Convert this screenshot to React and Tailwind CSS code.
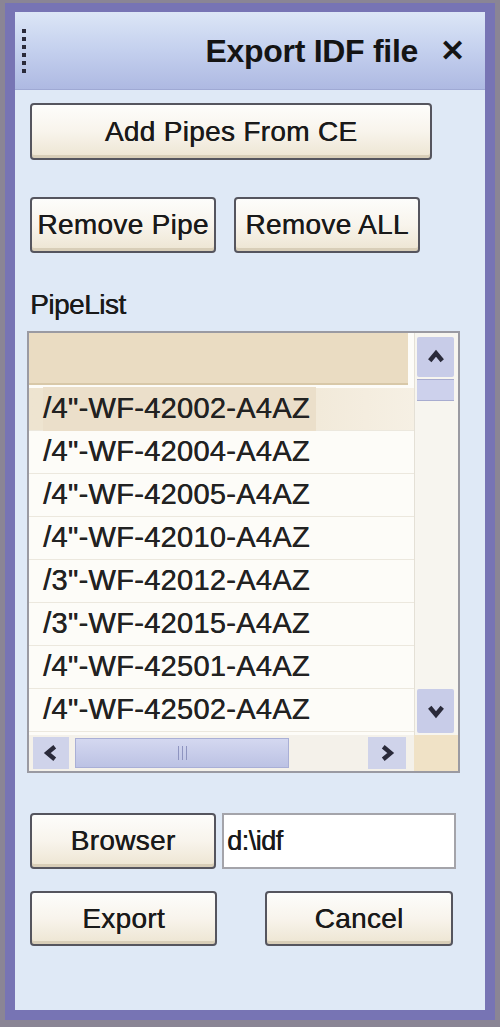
const pipes = [
  '/4"-WF-42002-A4AZ',
  '/4"-WF-42004-A4AZ',
  '/4"-WF-42005-A4AZ',
  '/4"-WF-42010-A4AZ',
  '/3"-WF-42012-A4AZ',
  '/3"-WF-42015-A4AZ',
  '/4"-WF-42501-A4AZ',
  '/4"-WF-42502-A4AZ',
];

const Btn = ({ children, className = "" }) => (
  <button
    className={`flex items-center justify-center rounded-[4px] border-2 border-[#55555e] bg-gradient-to-b from-[#fdfdfb] via-[#f8f4ec] to-[#ede5d2] text-[28px] tracking-[0.3px] text-[#1a1a1a] [text-shadow:0.4px_0_0_#1a1a1a] shadow-[inset_0_-3px_0_#d8ceb8] ${className}`}
  >
    {children}
  </button>
);

const Arrow = ({ dir }) => {
  const d = {
    up: "M3 11 L8 5 L13 11",
    down: "M3 5 L8 11 L13 5",
    left: "M11 3 L5 8 L11 13",
    right: "M5 3 L11 8 L5 13",
  }[dir];
  return (
    <svg width="20" height="20" viewBox="0 0 16 16">
      <path d={d} fill="none" stroke="#2a2a3a" strokeWidth="3.5" />
    </svg>
  );
};

export default function App() {
  return (
    <div
      className="w-[500px] h-[1027px] bg-[#8a8595] pt-[3px] px-[5px] pb-[7px]"
      style={{ fontFamily: '"Liberation Sans", Arial, sans-serif' }}
    >
      <div className="h-full bg-[#7774b4] pt-[9px] px-[10px] pb-[10px]">
        <div className="h-full flex flex-col bg-[#dfe9f6]">
          {/* title bar */}
          <div className="h-[78px] flex items-center bg-gradient-to-b from-[#dce6f6] via-[#c4d0ee] to-[#aeb9e2] border-b border-[#9fa9d4]">
            <div className="ml-[7px] flex flex-col gap-[4px]">
              {[0, 1, 2, 3, 4, 5].map((i) => (
                <div key={i} className="w-[4px] h-[4px] bg-[#2a2a3a]" />
              ))}
            </div>
            <div className="ml-auto text-[32px] font-bold text-[#141414] tracking-[-0.3px] leading-none">
              Export IDF file
            </div>
            <div className="ml-[22px] mr-[20px] text-[30px] font-bold leading-none text-[#141414]">
              ✕
            </div>
          </div>

          <div className="flex flex-col pl-[15px] pr-[10px]">
            <Btn className="mt-[13px] w-[402px] h-[57px]">Add Pipes From CE</Btn>

            <div className="mt-[37px] flex gap-[18px]">
              <Btn className="w-[186px] h-[56px]">Remove Pipe</Btn>
              <Btn className="w-[186px] h-[56px]">Remove ALL</Btn>
            </div>

            <div className="mt-[38px] text-[28px] text-[#1a1a1a] tracking-[-0.5px] leading-none [text-shadow:0.4px_0_0_#1a1a1a]">
              PipeList
            </div>

            {/* list box */}
            <div className="mt-[12px] -ml-[3px] w-[433px] h-[442px] border-2 border-[#9a9aa2] bg-[#fdfcf8] flex flex-col">
              <div className="flex flex-1 min-h-0">
                <div className="flex-1 flex flex-col">
                  <div className="h-[52px] bg-[#eadcc2] border-b-2 border-[#d8c8a8] mr-[6px]" />
                  <div className="flex flex-col pt-[3px]">
                    {pipes.map((p, i) => (
                      <div
                        key={p}
                        className={`h-[43px] flex items-center border-b border-[#ece8de] pl-[14px] text-[29px] text-[#222] tracking-[0.3px] [text-shadow:0.4px_0_0_#222] ${
                          i === 0 ? "bg-gradient-to-r from-[#eee4d0] via-[#eee4d0] to-[#f6f0e4]" : ""
                        }`}
                      >
                        <span className={i === 0 ? "bg-[#ebdfca] pr-[6px]" : ""}>{p}</span>
                      </div>
                    ))}
                  </div>
                </div>
                {/* vertical scrollbar */}
                <div className="w-[44px] flex flex-col border-l border-[#e4e0d6] bg-[#f7f5ef] pl-[2px] pr-[4px] pt-[4px]">
                  <div className="h-[40px] flex items-center justify-center bg-[#c8cce8] rounded-[2px]">
                    <Arrow dir="up" />
                  </div>
                  <div className="mt-[2px] h-[22px] bg-[#cdd1ec] border-y border-[#a8acd0]" />
                  <div className="flex-1" />
                  <div className="mb-[2px] h-[44px] flex items-center justify-center bg-[#c8cce8] rounded-[2px]">
                    <Arrow dir="down" />
                  </div>
                </div>
              </div>
              {/* horizontal scrollbar */}
              <div className="h-[36px] flex bg-[#f4efe2]">
                <div className="flex-1 flex items-center gap-[6px] pl-[4px] pr-[8px] bg-[#f4f1ea]">
                  <div className="w-[36px] h-[32px] flex items-center justify-center bg-[#cfd3ea]">
                    <Arrow dir="left" />
                  </div>
                  <div className="w-[214px] h-[30px] flex items-center justify-center bg-gradient-to-b from-[#d4d8f0] to-[#bcc2e4] border border-[#a9afd6]">
                    <div className="flex gap-[3px]">
                      <div className="w-[1px] h-[14px] bg-[#8e94c0]" />
                      <div className="w-[1px] h-[14px] bg-[#8e94c0]" />
                      <div className="w-[1px] h-[14px] bg-[#8e94c0]" />
                    </div>
                  </div>
                  <div className="flex-1" />
                  <div className="w-[38px] h-[32px] flex items-center justify-center bg-[#cfd3ea]">
                    <Arrow dir="right" />
                  </div>
                </div>
                <div className="w-[44px] bg-[#f0e2c6]" />
              </div>
            </div>

            <div className="mt-[40px] flex items-center gap-[6px]">
              <Btn className="w-[186px] h-[56px]">Browser</Btn>
              <div className="w-[234px] h-[56px] border-2 border-[#a4a4aa] bg-white flex items-center pl-[3px] text-[27px] text-[#1a1a1a] tracking-[-0.5px] [text-shadow:0.4px_0_0_#1a1a1a]">
                d:\idf
              </div>
            </div>

            <div className="mt-[22px] flex gap-[48px]">
              <Btn className="w-[187px] h-[55px] border-[#3e4a6e]">Export</Btn>
              <Btn className="w-[188px] h-[55px]">Cancel</Btn>
            </div>
          </div>
        </div>
      </div>
    </div>
  );
}
